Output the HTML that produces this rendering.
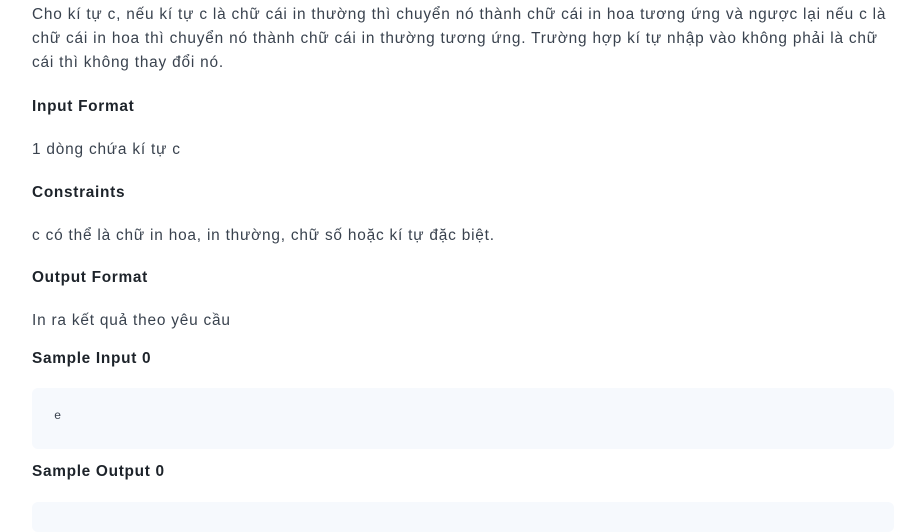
<!DOCTYPE html>
<html><head><meta charset="utf-8"><style>
body{margin:0;background:#fff;width:915px;height:516px;overflow:hidden;font-family:"Liberation Sans",sans-serif;color:#39424e;}
.t{position:absolute;left:32px;font-size:15.4px;letter-spacing:0.8px;white-space:nowrap;line-height:24px;}
.h{position:absolute;left:32px;font-size:15.4px;letter-spacing:0.7px;font-weight:bold;color:#1d232a;white-space:nowrap;line-height:20px;}
.box{position:absolute;left:32px;width:862px;background:#f6f9fd;border-radius:6px;}
</style></head><body>
<div class="t" style="top:3px">Cho kí tự c, nếu kí tự c là chữ cái in thường thì chuyển nó thành chữ cái in hoa tương ứng và ngược lại nếu c là<br>chữ cái in hoa thì chuyển nó thành chữ cái in thường tương ứng. Trường hợp kí tự nhập vào không phải là chữ<br>cái thì không thay đổi nó.</div>
<div class="h" style="top:97px">Input Format</div>
<div class="t" style="top:138px">1 dòng chứa kí tự c</div>
<div class="h" style="top:183px">Constraints</div>
<div class="t" style="top:224px">c có thể là chữ in hoa, in thường, chữ số hoặc kí tự đặc biệt.</div>
<div class="h" style="top:268px">Output Format</div>
<div class="t" style="top:309px">In ra kết quả theo yêu cầu</div>
<div class="h" style="top:349px">Sample Input 0</div>
<div class="box" style="top:388px;height:61px"><span style="position:absolute;left:22px;top:21px;font-family:'Liberation Mono',monospace;font-size:12px">e</span></div>
<div class="h" style="top:462px">Sample Output 0</div>
<div class="box" style="top:502px;height:30px"></div>
</body></html>
